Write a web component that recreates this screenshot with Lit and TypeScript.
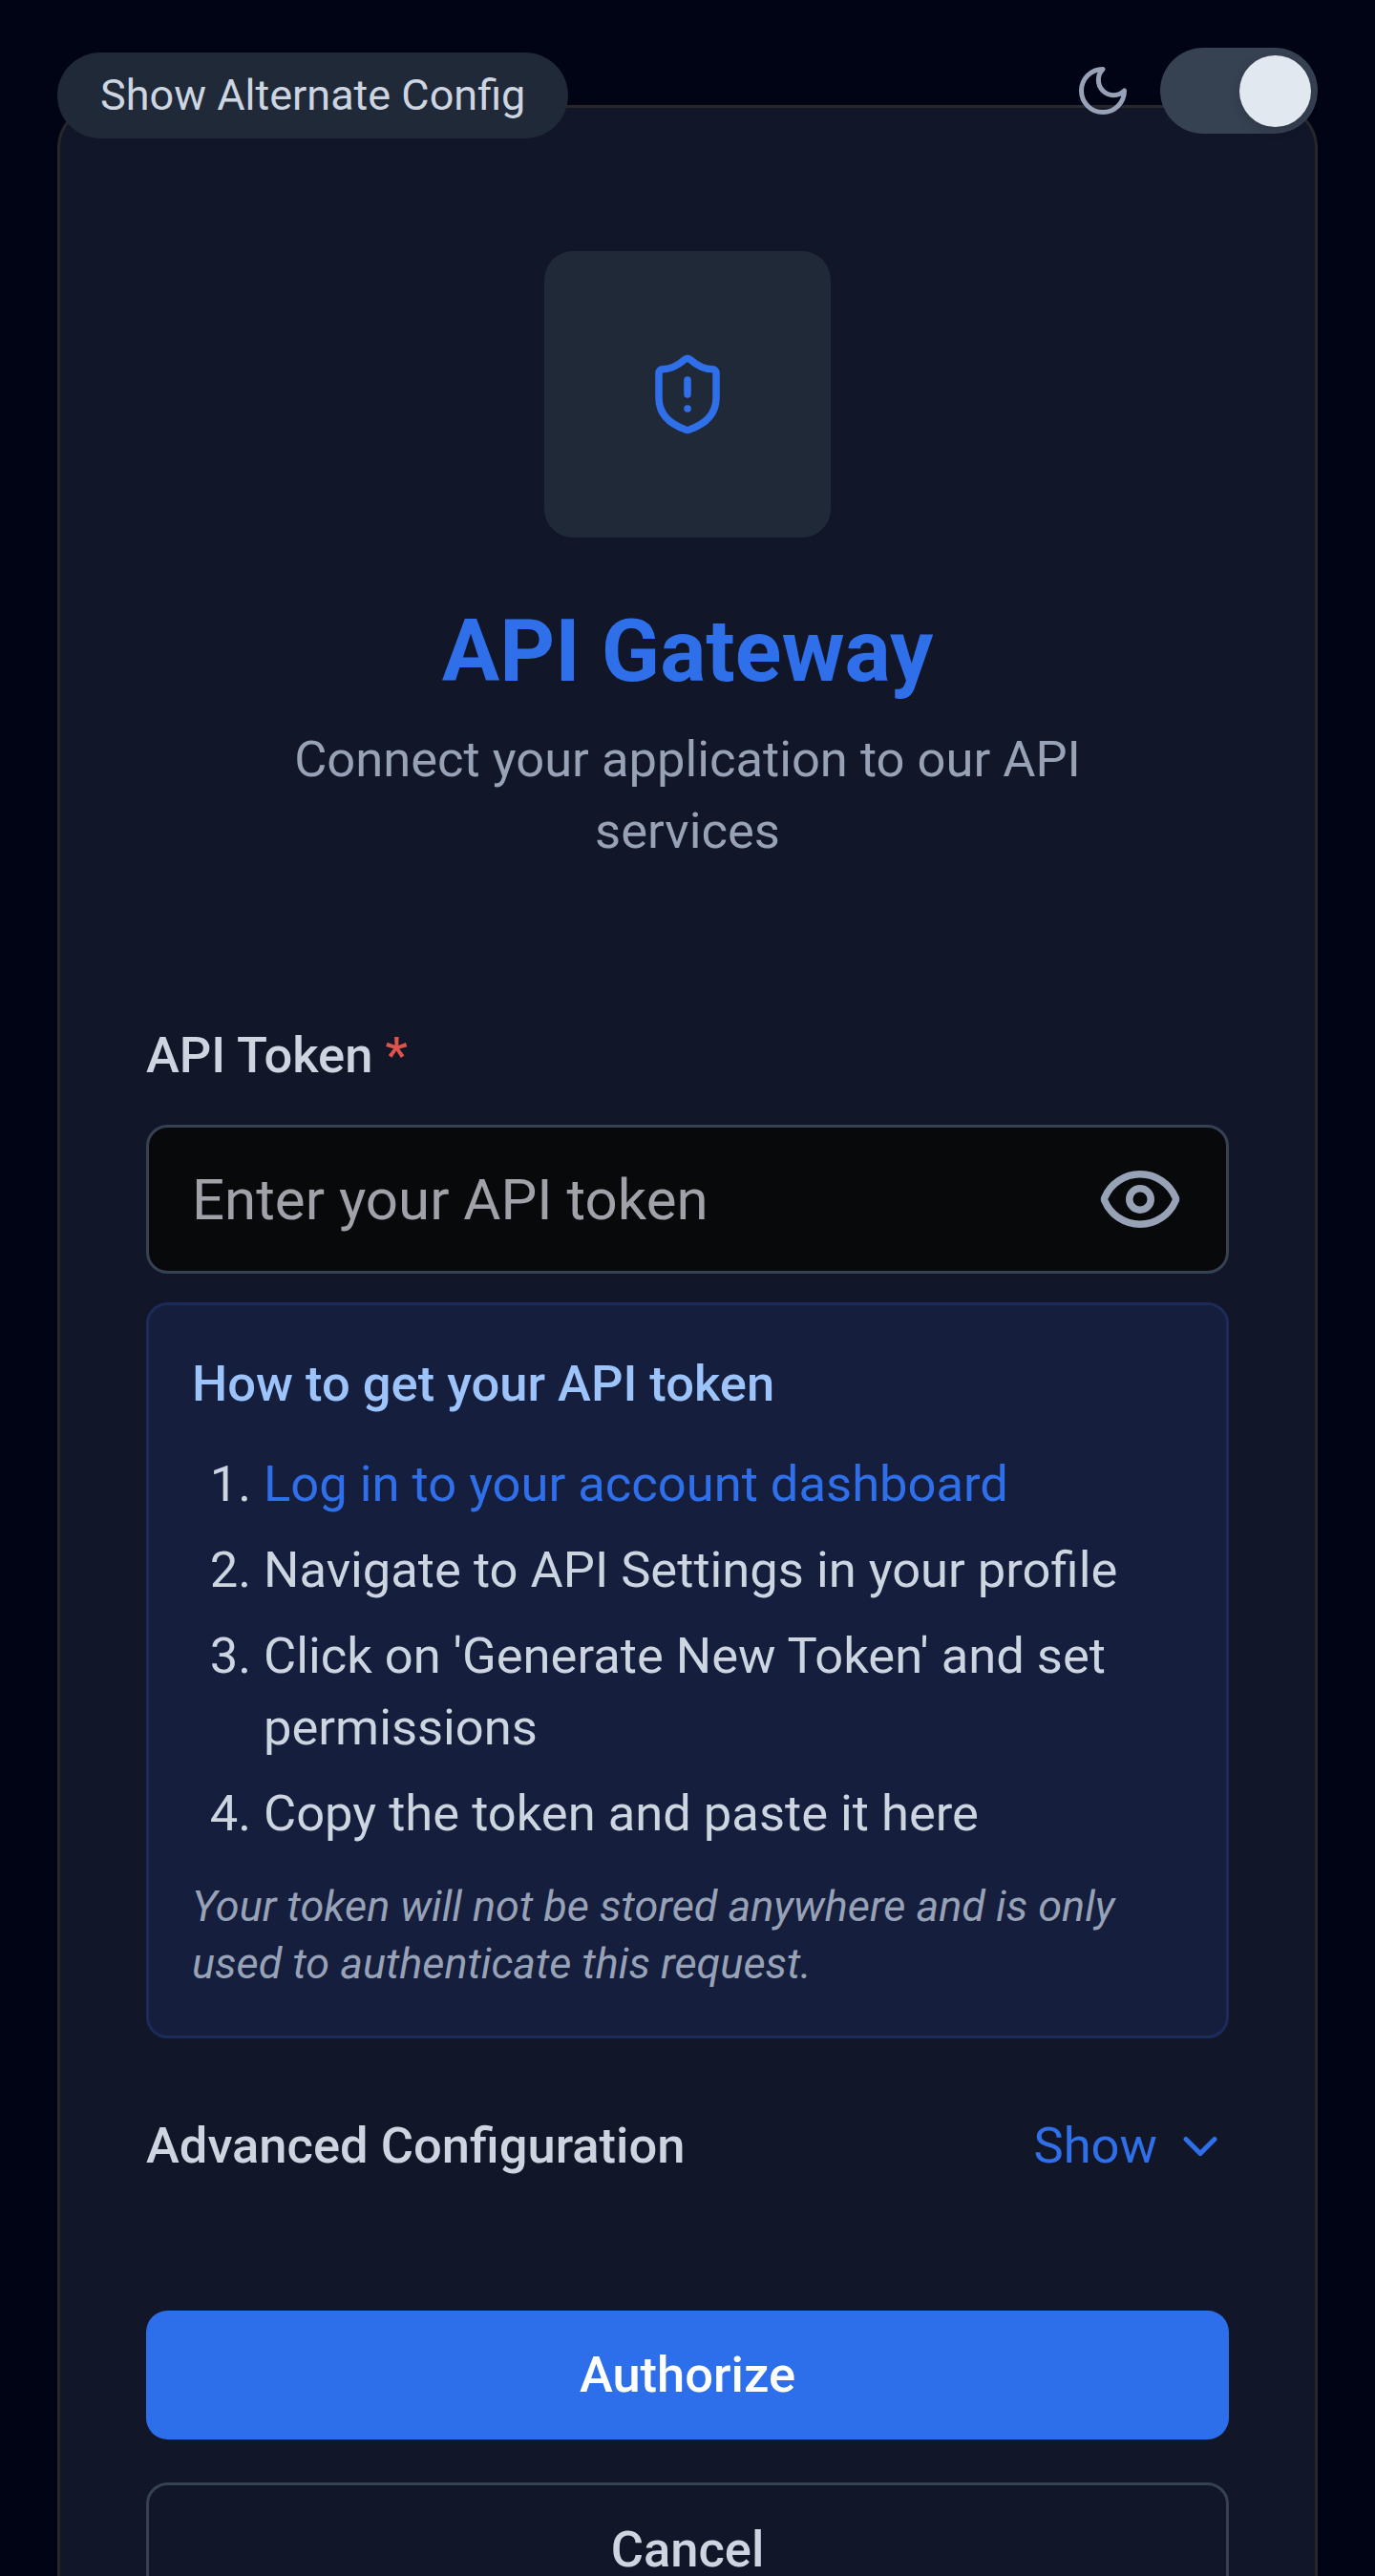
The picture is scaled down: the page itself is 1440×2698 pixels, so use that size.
import { LitElement, html, css } from "lit";
import { customElement, state } from "lit/decorators.js";

@customElement("app-root")
export class AppRoot extends LitElement {
  @state() private steps = [
    { text: "Log in to your account dashboard", link: true },
    { text: "Navigate to API Settings in your profile", link: false },
    { text: "Click on 'Generate New Token' and set permissions", link: false },
    { text: "Copy the token and paste it here", link: false },
  ];

  static styles = css`
    :host {
      display: block;
      position: relative;
      box-sizing: border-box;
      height: 2698px;
      overflow: hidden;
      padding: 110px 60px 0;
      background: #010414;
      font-family: Roboto, "Liberation Sans", sans-serif;
      font-size: 52.5px;
      line-height: 75px;
      color: #cdd5e1;
    }
    * { box-sizing: border-box; }
    h1, h2, p, ol { margin: 0; padding: 0; }
    button { font: inherit; color: inherit; border: 0; padding: 0; background: none; display: block; }
    svg { display: block; flex: none; fill: none; stroke: currentColor; stroke-width: 2; stroke-linecap: round; stroke-linejoin: round; }
    .i60 { width: 60px; height: 60px; }
    .i90 { width: 90px; height: 90px; }
    .alt {
      position: absolute; left: 60px; top: 55px; height: 90px; padding: 0 45px;
      border-radius: 45px; background: #202938; color: #cdd5e1;
      font-size: 45px; line-height: 90px; white-space: nowrap;
    }
    .theme {
      position: absolute; right: 60px; top: 50px; display: flex; align-items: center; gap: 30px;
      color: #98a2b7;
    }
    .switch {
      display: flex; align-items: center; justify-content: flex-end;
      width: 165px; height: 90px; padding: 7.5px; border-radius: 45px; background: #364152;
    }
    .knob { width: 75px; height: 75px; border-radius: 50%; background: #e2e8f0; box-shadow: 0 4px 12px rgba(0, 0, 0, 0.15); }
    .card {
      height: 2800px; padding: 150px 90px 0; border: 3px solid #27272a; border-radius: 45px;
      background: #111628;
    }
    .head { display: flex; flex-direction: column; align-items: center; text-align: center; }
    .logo {
      display: flex; align-items: center; justify-content: center; width: 300px; height: 300px;
      margin-bottom: 60px; border-radius: 30px; background: #202938; color: #2f6fea;
    }
    h1 { font-size: 90px; line-height: 120px; font-weight: 700; color: #2f6fea; }
    .sub { width: 940px; margin-top: 15px; color: #98a2b7; }
    .label { margin-top: 160px; font-weight: 500; }
    .req { color: #dc544b; }
    .field {
      display: flex; align-items: center; justify-content: space-between; height: 156px; margin-top: 35px;
      padding: 0 45px; border: 3px solid #364152; border-radius: 22.5px; background: #08090b;
      font-size: 60px; color: #a1a1aa;
    }
    .eye { color: #98a2b7; }
    .info {
      margin-top: 30px; padding: 45px; border: 3px solid #1d2b5b; border-radius: 22.5px; background: #151e3d;
    }
    h2 { font-size: 52.5px; line-height: 75px; font-weight: 500; color: #9dc3fb; }
    ol { display: flex; flex-direction: column; gap: 15px; margin: 30px 0; padding-left: 75px; }
    .link { color: #2f6fea; }
    .note { font-size: 45px; line-height: 60px; font-style: italic; color: #98a2b7; }
    .adv { display: flex; justify-content: space-between; align-items: center; margin-top: 75px; }
    .advTitle { font-weight: 500; }
    .show { display: flex; align-items: center; gap: 15px; color: #2f6fea; }
    .btn { width: 100%; border-radius: 22.5px; font-weight: 500; }
    .primary { height: 135px; margin-top: 135px; background: #2d6eea; color: #fff; }
    .secondary { height: 141px; margin-top: 45px; border: 3px solid #364152; }
  `;

  render() {
    return html`
      <main class="card">
        <header class="head">
          <div class="logo">
            <svg class="i90" viewBox="0 0 24 24">
              <path d="M20 13c0 5-3.5 7.5-7.66 8.95a1 1 0 0 1-.67-.01C7.5 20.5 4 18 4 13V6a1 1 0 0 1 1-1c2 0 4.500-1.200 6.240-2.720a1.170 1.170 0 0 1 1.520 0C14.510 3.810 17 5 19 5a1 1 0 0 1 1 1z"></path>
              <path d="M12 8v4"></path><path d="M12 16h.01"></path>
            </svg>
          </div>
          <h1>API Gateway</h1>
          <p class="sub">Connect your application to our API services</p>
        </header>
        <div class="label">API Token <span class="req">*</span></div>
        <div class="field">
          <span>Enter your API token</span>
          <svg class="i90 eye" viewBox="0 0 24 24">
            <path d="M2.062 12.348a1 1 0 0 1 0-.696 10.750 10.750 0 0 1 19.876 0 1 1 0 0 1 0 .696 10.750 10.750 0 0 1-19.876 0"></path>
            <circle cx="12" cy="12" r="3"></circle>
          </svg>
        </div>
        <section class="info">
          <h2>How to get your API token</h2>
          <ol>
            ${this.steps.map((s) => html`<li>${s.link ? html`<a class="link">${s.text}</a>` : s.text}</li>`)}
          </ol>
          <p class="note">Your token will not be stored anywhere and is only used to authenticate this request.</p>
        </section>
        <div class="adv">
          <span class="advTitle">Advanced Configuration</span>
          <button class="show">
            <span>Show</span>
            <svg class="i60" viewBox="0 0 24 24"><path d="m6 9 6 6 6-6"></path></svg>
          </button>
        </div>
        <button class="btn primary">Authorize</button>
        <button class="btn secondary">Cancel</button>
      </main>
      <button class="alt">Show Alternate Config</button>
      <div class="theme">
        <svg class="i60" viewBox="0 0 24 24"><path d="M12 3a6 6 0 0 0 9 9 9 9 0 1 1-9-9Z"></path></svg>
        <div class="switch"><div class="knob"></div></div>
      </div>
    `;
  }
}
